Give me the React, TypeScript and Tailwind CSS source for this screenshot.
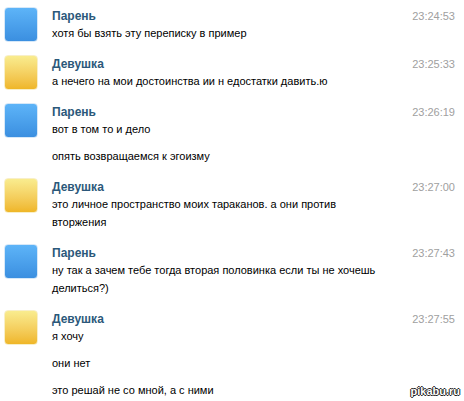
import React from "react";

type Msg = { who: "b" | "g"; time: string; lines: string[] };

const msgs: Msg[] = [
  { who: "b", time: "23:24:53", lines: ["хотя бы взять эту переписку в пример"] },
  { who: "g", time: "23:25:33", lines: ["а нечего на мои достоинства ии н едостатки давить.ю"] },
  { who: "b", time: "23:26:19", lines: ["вот в том то и дело", "опять возвращаемся к эгоизму"] },
  { who: "g", time: "23:27:00", lines: ["это личное пространство моих тараканов. а они против вторжения"] },
  { who: "b", time: "23:27:43", lines: ["ну так а зачем тебе тогда вторая половинка если ты не хочешь делиться?)"] },
  { who: "g", time: "23:27:55", lines: ["я хочу", "они нет", "это решай не со мной, а с ними"] },
];

function Avatar({ who }: { who: "b" | "g" }) {
  return who === "b" ? (
    <div className="w-[34px] h-[35px] shrink-0 rounded-[4px] bg-gradient-to-b from-[#5db4f8] to-[#3b8fe0] border border-[#d6e8f8]" />
  ) : (
    <div className="w-[34px] h-[35px] shrink-0 rounded-[4px] bg-gradient-to-b from-[#f9ec8e] to-[#efb626] border border-[#f8efc8]" />
  );
}

export default function App() {
  return (
    <div
      className="relative w-[464px] h-[401px] bg-white overflow-hidden text-[11px] text-black"
      style={{ fontFamily: "Tahoma, 'Liberation Sans', Arial, sans-serif" }}
    >
      <div className="pt-[7px]">
        {msgs.map((m, i) => (
          <div key={i} className="flex pl-[4px] pr-[9px] pb-[13px]">
            <Avatar who={m.who} />
            <div className="ml-[14px] flex-1">
              <div className="flex justify-between mt-[2px] h-[15px] leading-[15px]">
                <span className="font-bold text-[12px] text-[#2b587a]">{m.who === "b" ? "Парень" : "Девушка"}</span>
                <span className="text-[#a0a0a0]">{m.time}</span>
              </div>
              <div className="w-[336px]">
                {m.lines.map((l, j) => (
                  <p key={j} className={"leading-[18px] " + (j > 0 ? "mt-[9px]" : "")}>
                    {l}
                  </p>
                ))}
              </div>
            </div>
          </div>
        ))}
      </div>
      <div
        className="absolute right-[4px] bottom-[4px] text-[11px] font-bold text-white leading-none"
        style={{ textShadow: "1px 0 0 #222, -1px 0 0 #222, 0 1px 0 #222, 0 -1px 0 #222" }}
      >
        pikabu.ru
      </div>
    </div>
  );
}
